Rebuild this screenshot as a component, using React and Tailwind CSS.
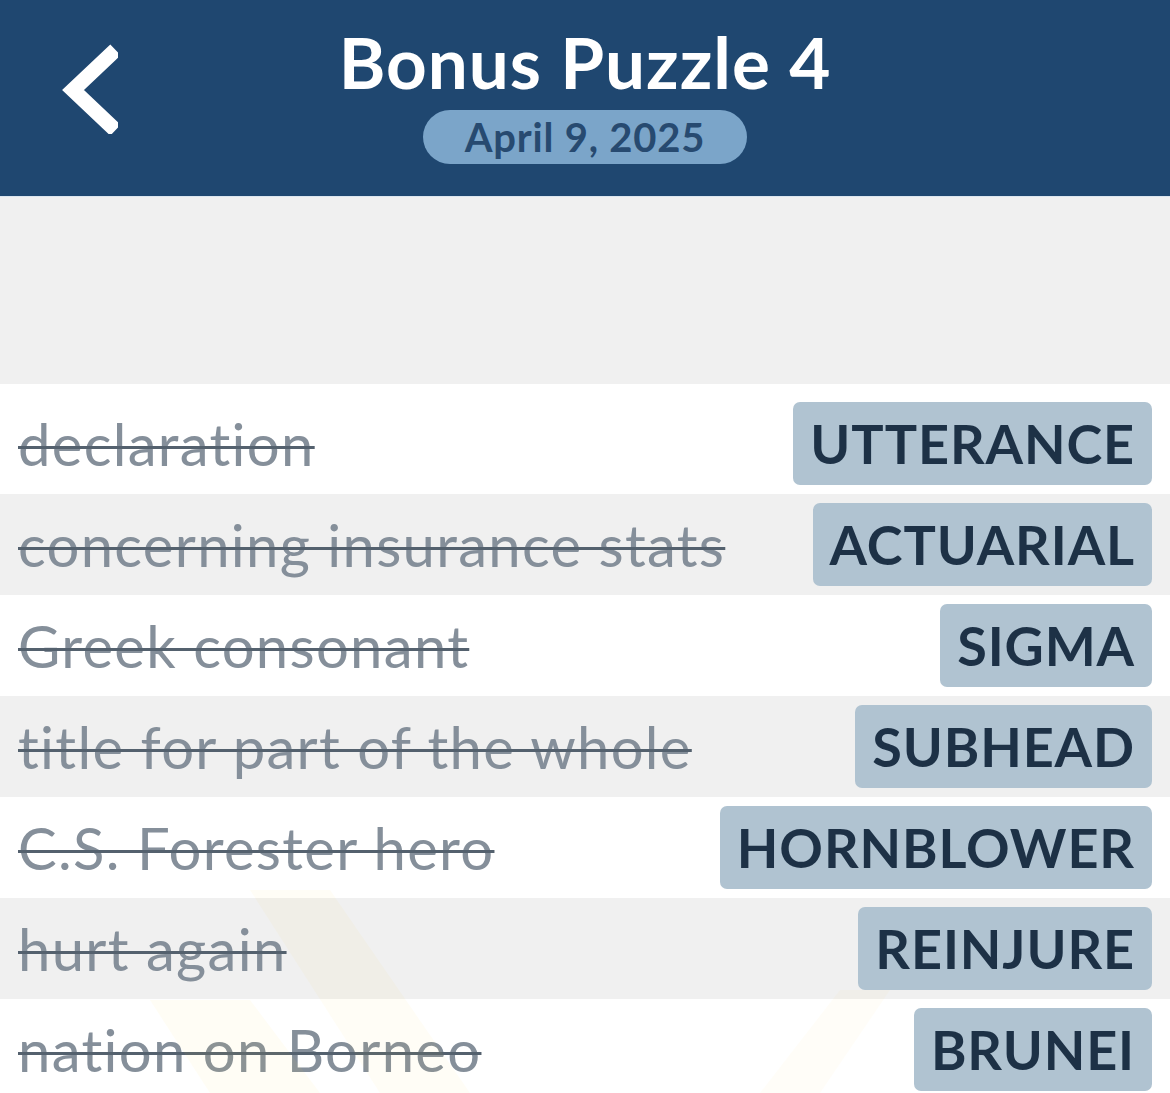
import React from 'react'

const clues = [
  { clue: 'declaration', answer: 'UTTERANCE' },
  { clue: 'concerning insurance stats', answer: 'ACTUARIAL' },
  { clue: 'Greek consonant', answer: 'SIGMA' },
  { clue: 'title for part of the whole', answer: 'SUBHEAD' },
  { clue: 'C.S. Forester hero', answer: 'HORNBLOWER' },
  { clue: 'hurt again', answer: 'REINJURE' },
  { clue: 'nation on Borneo', answer: 'BRUNEI' },
]

function BackChevron() {
  return (
    <svg width="60" height="90" viewBox="0 0 60 90" fill="none">
      <path d="M52 11 L15 46 L52 81" stroke="#fff" strokeWidth="15" strokeLinecap="square" strokeLinejoin="miter" />
    </svg>
  )
}

export default function App() {
  return (
    <div className="relative w-[1170px] h-[1093px] overflow-hidden bg-[#f0f0f0] font-['Lato',sans-serif]">
      {/* Header */}
      <header className="relative h-[197px] bg-[#1f4770] border-b border-[#dbe6ef]">
        <div className="absolute left-[58px] top-[44px]">
          <BackChevron />
        </div>
        <div className="flex flex-col items-center pt-[19px]">
          <h1 className="text-[71px] leading-[86px] font-bold text-white tracking-[1px]">Bonus Puzzle 4</h1>
          <div className="mt-[5px] h-[54px] px-[42px] rounded-full bg-[#7ba5c9] flex items-center">
            <span className="text-[40px] font-bold text-[#274a70] tracking-[0.8px]">April 9, 2025</span>
          </div>
        </div>
      </header>

      <div className="h-[187px]" />

      {/* Clue list */}
      <div className="bg-white pt-[9px]">
        {clues.map((c, i) => (
          <div
            key={c.answer}
            className={`h-[101px] flex items-center justify-between pl-[18px] pr-[18px] ${i % 2 === 1 ? 'bg-[#f0f0f0]' : 'bg-white'}`}
          >
            <span className="text-[58px] tracking-[1.3px] text-[#858f9a] line-through decoration-[#54616e] decoration-[3px] whitespace-nowrap">
              {c.clue}
            </span>
            <span className="h-[83px] flex items-center px-[17px] rounded-[7px] bg-[#b0c3d1] text-[54px] font-bold text-[#1d3146] tracking-[0.9px]">
              {c.answer}
            </span>
          </div>
        ))}
      </div>

      {/* faint watermark */}
      <svg className="absolute left-0 top-[860px] pointer-events-none" width="1170" height="233" viewBox="0 0 1170 233">
        <polygon points="250,30 330,30 470,233 380,233" fill="#ffd54f" opacity="0.05" />
        <polygon points="150,140 250,140 320,233 210,233" fill="#ffd54f" opacity="0.06" />
        <polygon points="840,130 890,130 820,233 760,233" fill="#ffd54f" opacity="0.04" />
      </svg>
    </div>
  )
}
